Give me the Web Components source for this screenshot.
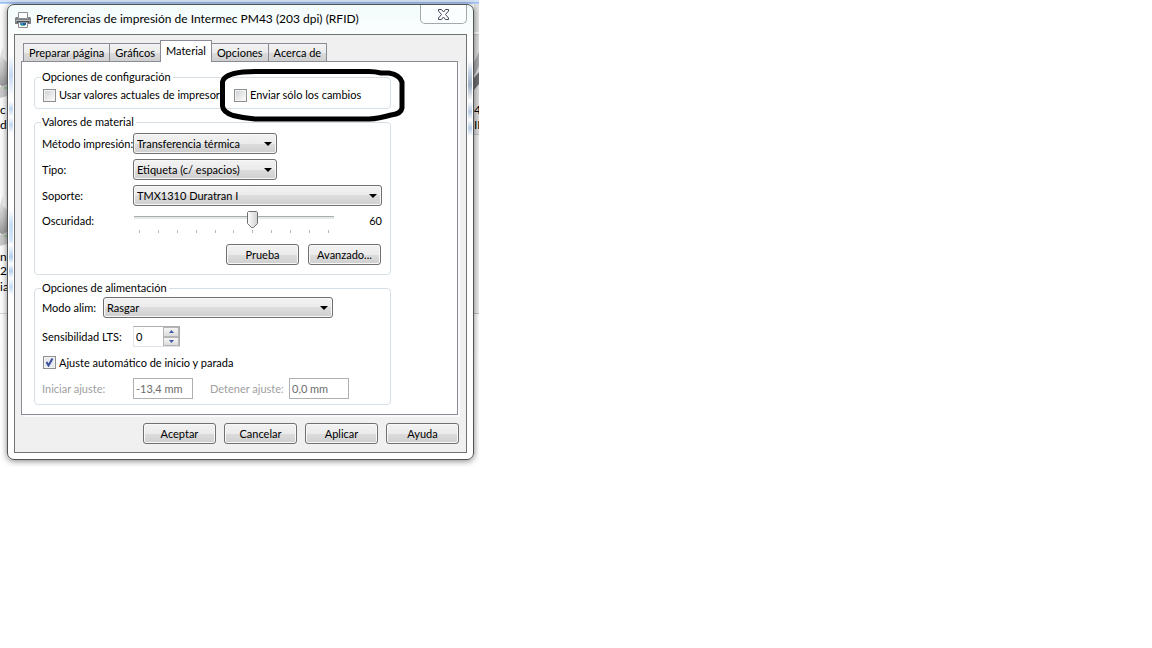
<!DOCTYPE html>
<html lang="es">
<head>
<meta charset="utf-8">
<title>Preferencias de impresión</title>
<style>
body {
  margin: 0;
  background: #ffffff;
  color: #000000;
  font-family: Lato, "Liberation Sans", sans-serif;
  font-size: 11px;
  line-height: 14px;
}
</style>
</head>
<body>

<desk-top>
  <pref-dialog heading="Preferencias de impresión de Intermec PM43 (203 dpi) (RFID)">
    <tab-panel tabs="Preparar página|Gráficos|Material|Opciones|Acerca de" active="2">
      <group-box legend="Opciones de configuración" class="config">
        <field-row class="checks">
          <check-box label="Usar valores actuales de impresora"></check-box>
          <check-box label="Enviar sólo los cambios"></check-box>
        </field-row>
        <pen-mark slot="over"></pen-mark>
      </group-box>

      <group-box legend="Valores de material" class="material">
        <combo-box label="Método impresión:" value="Transferencia térmica" class="short"></combo-box>
        <combo-box label="Tipo:" value="Etiqueta (c/ espacios)" class="short"></combo-box>
        <combo-box label="Soporte:" value="TMX1310 Duratran I"></combo-box>
        <track-bar label="Oscuridad:" value="60"></track-bar>
        <field-row class="end">
          <push-button>Prueba</push-button>
          <push-button>Avanzado...</push-button>
        </field-row>
      </group-box>

      <group-box legend="Opciones de alimentación" class="feed">
        <combo-box label="Modo alim:" value="Rasgar" class="mode"></combo-box>
        <spin-box label="Sensibilidad LTS:" value="0"></spin-box>
        <check-box label="Ajuste automático de inicio y parada" checked></check-box>
        <field-row class="adjust">
          <text-field label="Iniciar ajuste:" value="-13,4 mm" class="start"></text-field>
          <text-field label="Detener ajuste:" value="0,0 mm" class="stop"></text-field>
        </field-row>
      </group-box>
    </tab-panel>

    <push-button slot="actions">Aceptar</push-button>
    <push-button slot="actions">Cancelar</push-button>
    <push-button slot="actions">Aplicar</push-button>
    <push-button slot="actions">Ayuda</push-button>
  </pref-dialog>
</desk-top>

<script>
function template(html) {
  const t = document.createElement('template');
  t.innerHTML = '<style>:host, * { box-sizing: border-box; }</style>' + html;
  return t;
}

class BaseElement extends HTMLElement {
  constructor() {
    super();
    this.attachShadow({ mode: 'open' });
  }

  connectedCallback() {
    if (this.shadowRoot.childNodes.length) return;
    this.shadowRoot.appendChild(this.constructor.template.content.cloneNode(true));
    this.render();
  }

  $(selector) {
    return this.shadowRoot.querySelector(selector);
  }

  render() {}
}

/* Strip of the folder window that lies behind the dialog */
class DeskTop extends BaseElement {
  static template = template(`
<style>
:host {
  display: block;
  position: relative;
  width: fit-content;
  padding: 4px 5px 7px 7px;
  overflow: hidden;
  background: linear-gradient(#d6e3f6 0, #d6e3f6 2px, #8fb8f0 2px, #c3dafa 4px, #fbfbfb 4px, #ffffff 100%);
}
.behind {
  position: absolute;
  top: 0;
  bottom: 0;
  width: 7px;
}
.left { left: 0; }
.right { right: 0; width: 5px; }
.behind span {
  position: absolute;
  left: 0;
  font-size: 12px;
  line-height: 14px;
}
svg { position: absolute; top: 0; left: 0; }
</style>
<div class="behind left">
  <svg width="7" height="467" aria-hidden="true">
    <defs>
      <linearGradient id="g" x1="0" y1="0" x2="0" y2="1">
        <stop offset="0" stop-color="#f4f4f4"/>
        <stop offset=".6" stop-color="#bdbdbd"/>
        <stop offset="1" stop-color="#8f8f8f"/>
      </linearGradient>
    </defs>
    <path d="M0 57 L2 48 L4 49 L3 58 L7 62 V90 L0 85Z" fill="url(#g)"/>
    <path d="M0 87 L7 84 V96 L0 98Z" fill="#c9c9c9"/>
    <path d="M4 87h3v2h-3z" fill="#9bc598"/>
    <path d="M0 205 L2 196 L4 197 L3 206 L7 210 V238 L0 233Z" fill="url(#g)"/>
    <path d="M0 235 L7 232 V244 L0 246Z" fill="#c9c9c9"/>
    <path d="M4 235h3v2h-3z" fill="#9bc598"/>
    <path d="M0 313.500h7" stroke="#d8d8d8"/>
  </svg>
  <span style="top:103px">c</span>
  <span style="top:118px">d</span>
  <span style="top:250px">n</span>
  <span style="top:264px">22</span>
  <span style="top:280px">ia</span>
</div>
<div class="behind right">
  <svg width="5" height="467" aria-hidden="true">
    <path d="M0 4h5v28h-5z" fill="#e2e2e2"/>
    <path d="M0 34.500h5" stroke="#c4c4c4"/>
    <path d="M0 35h5v100h-5z" fill="#dcdcdc"/>
    <path d="M0 62 L5 52 V66 L0 76Z" fill="#a9a9ad"/>
    <path d="M0 78 L5 72 V84 L0 90Z" fill="#6f6f73"/>
    <path d="M0 135h5v178h-5z" fill="#ececec"/>
    <path d="M0 134.500h5M0 313.500h5" stroke="#c4c4c4"/>
  </svg>
  <span style="top:103px">4</span>
  <span style="top:118px">ID</span>
</div>
<slot></slot>
`);
}
customElements.define('desk-top', DeskTop);

/* Window frame with title bar, body and a row of actions */
class PrefDialog extends BaseElement {
  static template = template(`
<style>
:host {
  display: flex;
  flex-direction: column;
  position: relative;
  width: 467px;
  max-width: 100%;
  border: 1px solid #505457;
  border-radius: 7px;
  background: linear-gradient(#f3fbfb, #ffffff 40px);
  box-shadow: 0 1px 6px rgba(0, 0, 0, .5);
}
header {
  display: flex;
  align-items: center;
  height: 29px;
  padding-left: 7px;
  gap: 5px;
}
h1 {
  flex: 1;
  margin: 0 0 2px;
  font-size: 12px;
  line-height: 16px;
  font-weight: normal;
  white-space: nowrap;
}
.close {
  align-self: flex-start;
  display: flex;
  align-items: center;
  justify-content: center;
  width: 47px;
  height: 19px;
  margin-right: 6px;
  padding: 0;
  border: 1px solid #a2a8ab;
  border-top: 0;
  border-radius: 0 0 5px 5px;
  background: #fafefe;
}
main {
  margin: 0 6px 6px;
  padding: 5px 8px 8px 6px;
  border: 1px solid #6f7376;
  background: #f0f0f0;
}
/* blurred shapes seen through the glass border */
.glass {
  position: absolute;
  top: 50px;
  bottom: 20px;
  width: 4px;
}
.glass.l {
  left: 1px;
  background: linear-gradient(transparent, #c4d8f2 20px, transparent 42px, transparent 46px, #c4d8f2 54px, transparent 62px, #c4d8f2 70px, transparent 78px, transparent 155px, #c4dcf6 170px, #d4e6fa 185px, transparent 190px, #b4cdee 202px, transparent 209px, #b4cdee 216px, transparent 223px, #c4dcf6 232px, transparent 240px);
}
.glass.r {
  right: 1px;
  background: linear-gradient(transparent 6px, #c8d6e6 16px, #9eb0c4 30px, transparent 46px, #b6cce8 57px, transparent 65px, #b6cce8 73px, transparent 81px);
}
footer {
  display: flex;
  justify-content: flex-end;
  gap: 8px;
  margin-top: 8px;
  margin-right: -1px;
}
</style>
<div class="glass l"></div>
<div class="glass r"></div>
<header>
  <svg class="icon" width="16" height="16" viewBox="0 0 16 16" aria-hidden="true">
    <path d="M3.500 .5h9v6h-9z" fill="#fdfdfd" stroke="#8b8f93"/>
    <path d="M0 6.500Q0 5 1.500 5H3v2h10V5h1.500Q16 5 16 6.500V12H0z" fill="#7d8186"/>
    <path d="M1 8h14v1H1z" fill="#b9bdc1"/>
    <path d="M2 9h12v2H2z" fill="#494c50"/>
    <path d="M3.500 10.500h9v5h-9z" fill="#ffffff" stroke="#8b8f93"/>
    <path d="M5 11h3v2H5z" fill="#2f93c8"/>
    <path d="M8 11h3v2H8z" fill="#1e5f9b"/>
    <path d="M6 13h4v1H6z" fill="#63b98a"/>
  </svg>
  <h1></h1>
  <button class="close" aria-label="Cerrar">
    <svg width="13" height="11" viewBox="0 0 13 11" aria-hidden="true">
      <path d="M1.500 .5H4.500L6.500 3 8.500 .5H11.500V2L8.500 5.500 11.500 9V10.500H8.500L6.500 8 4.500 10.500H1.500V9L4.500 5.500 1.500 2z" fill="#ffffff" stroke="#43465b"/>
    </svg>
  </button>
</header>
<main>
  <slot></slot>
  <footer><slot name="actions"></slot></footer>
</main>
`);

  render() {
    this.$('h1').textContent = this.getAttribute('heading');
  }
}
customElements.define('pref-dialog', PrefDialog);

class TabPanel extends BaseElement {
  static template = template(`
<style>
:host { display: block; }
nav {
  display: flex;
  align-items: flex-end;
  height: 21px;
  padding-left: 2px;
}
button {
  height: 18px;
  margin: 0 0 0 -1px;
  padding: 0 5px;
  border: 1px solid #898c95;
  border-bottom: 0;
  background: linear-gradient(#f3f3f3, #ebebeb 50%, #dddddd 50%, #cfcfcf);
  font: inherit;
  color: inherit;
  white-space: nowrap;
}
button:first-child { margin-left: 0; }
button[aria-selected="true"] {
  position: relative;
  height: 22px;
  margin-bottom: -1px;
  padding-bottom: 2px;
  background: #ffffff;
}
.panel {
  display: flex;
  flex-direction: column;
  gap: 6px;
  padding: 8px 66px 9px 12px;
  border: 1px solid #898c95;
  background: #ffffff;
  box-shadow: 2px 2px 0 #fafafa;
}
</style>
<nav role="tablist"></nav>
<div class="panel" role="tabpanel"><slot></slot></div>
`);

  render() {
    const active = Number(this.getAttribute('active'));
    this.getAttribute('tabs').split('|').forEach((text, i) => {
      const button = document.createElement('button');
      button.setAttribute('role', 'tab');
      button.setAttribute('aria-selected', i === active);
      button.textContent = text;
      this.$('nav').appendChild(button);
    });
  }
}
customElements.define('tab-panel', TabPanel);

class GroupBox extends BaseElement {
  static template = template(`
<style>
:host {
  display: block;
  position: relative;
}
fieldset {
  display: flex;
  flex-direction: column;
  min-width: 0;
  margin: 0;
  padding: 0 8px 9px 7px;
  border: 1px solid #d5dfe5;
  border-radius: 4px;
}
legend {
  padding: 0 2px 0 1px;
  margin-left: -1px;
}
:host(.config) fieldset { padding-bottom: 2px; }
:host(.material) fieldset { gap: 5px; padding-top: 4px; }
:host(.feed) fieldset { gap: 8px; padding-top: 2px; padding-bottom: 5px; }
</style>
<fieldset><legend></legend><slot></slot></fieldset>
<slot name="over"></slot>
`);

  render() {
    this.$('legend').textContent = this.getAttribute('legend');
  }
}
customElements.define('group-box', GroupBox);

class FieldRow extends BaseElement {
  static template = template(`
<style>
:host {
  display: flex;
  align-items: center;
}
:host(.checks) { height: 22px; }
:host(.checks) ::slotted(:first-child) { width: 191px; }
:host(.end) { justify-content: flex-end; gap: 9px; padding-right: 1px; }
:host(.adjust) { gap: 17px; }
</style>
<slot></slot>
`);
}
customElements.define('field-row', FieldRow);

class CheckBox extends BaseElement {
  static template = template(`
<style>
:host { display: block; }
label {
  display: flex;
  align-items: center;
  gap: 3px;
  height: 15px;
  white-space: nowrap;
}
input {
  appearance: none;
  flex: none;
  width: 13px;
  height: 13px;
  margin: 0 0 0 1px;
  border: 1px solid #8e8f8f;
  background: linear-gradient(135deg, #c9cdd2, #f6f6f6 80%);
  box-shadow: inset 0 0 0 1px #f4f4f4;
}
input:checked {
  background: url('data:image/svg+xml,<svg xmlns="http://www.w3.org/2000/svg" width="11" height="11"><path d="M2.500 5L4.500 8.500L8.500 1.500" fill="none" stroke="%23394f9c" stroke-width="2"/></svg>') #e6e9ee;
}
</style>
<label><input type="checkbox"><span></span></label>
`);

  render() {
    this.$('span').textContent = this.getAttribute('label');
    this.$('input').checked = this.hasAttribute('checked');
  }
}
customElements.define('check-box', CheckBox);

class ComboBox extends BaseElement {
  static template = template(`
<style>
:host {
  display: flex;
  align-items: center;
}
label {
  flex: none;
  width: 91px;
  white-space: nowrap;
}
select {
  appearance: none;
  flex: 1;
  min-width: 0;
  height: 21px;
  margin: 0;
  padding: 0 20px 0 3px;
  border: 1px solid #707070;
  border-radius: 3px;
  background:
    url('data:image/svg+xml,<svg xmlns="http://www.w3.org/2000/svg" width="8" height="4"><path d="M0 0h8L4 4z"/></svg>') no-repeat right 4px center,
    linear-gradient(#f2f2f2, #ebebeb 50%, #dddddd 50%, #cfcfcf);
  box-shadow: inset 0 0 0 1px #f8f8f8;
  font: inherit;
  color: inherit;
}
:host(.short) select { flex: 0 0 144px; }
:host(.mode) label { width: 61px; }
:host(.mode) select { flex: 0 0 230px; }
</style>
<label for="c"></label>
<select id="c"><option></option></select>
`);

  render() {
    this.$('label').textContent = this.getAttribute('label');
    this.$('option').textContent = this.getAttribute('value');
  }
}
customElements.define('combo-box', ComboBox);

class TrackBar extends BaseElement {
  static template = template(`
<style>
:host {
  display: flex;
  align-items: flex-start;
  height: 28px;
}
label {
  flex: none;
  width: 92px;
  padding-top: 3px;
}
.track {
  flex: 0 0 200px;
  display: flex;
  flex-direction: column;
  gap: 2px;
}
input {
  appearance: none;
  width: 100%;
  height: 17px;
  margin: 0;
  background: linear-gradient(#a8acac 0, #a8acac 1px, #e4eaea 1px, #e4eaea 3px) no-repeat 0 5px / 100% 3px;
}
input::-webkit-slider-thumb {
  appearance: none;
  width: 11px;
  height: 18px;
  background: url('data:image/svg+xml,<svg xmlns="http://www.w3.org/2000/svg" width="11" height="18"><defs><linearGradient id="a" x2="1" y2="0"><stop offset="0" stop-color="%23ffffff"/><stop offset="1" stop-color="%23d0d0d0"/></linearGradient></defs><path d="M1.500 .5h8l1 1v11l-4 4h-2l-4-4v-11z" fill="url(%23a)" stroke="%23707070"/></svg>') no-repeat;
}
.ticks {
  display: flex;
  justify-content: space-between;
  padding: 0 5px;
}
.ticks i {
  width: 1px;
  height: 3px;
  background: #b8b8b8;
}
output {
  flex: 1;
  padding-top: 3px;
  text-align: right;
}
</style>
<label for="r"></label>
<div class="track">
  <input id="r" type="range" min="0" max="100">
  <div class="ticks"></div>
</div>
<output for="r"></output>
`);

  render() {
    const input = this.$('input');
    const output = this.$('output');
    this.$('label').textContent = this.getAttribute('label');
    this.$('.ticks').innerHTML = '<i></i>'.repeat(11);
    input.value = this.getAttribute('value');
    output.textContent = input.value;
    input.addEventListener('input', () => {
      output.textContent = input.value;
    });
  }
}
customElements.define('track-bar', TrackBar);

class SpinBox extends BaseElement {
  static template = template(`
<style>
:host {
  display: flex;
  align-items: center;
}
label {
  width: 91px;
  white-space: nowrap;
}
.box {
  display: flex;
  width: 47px;
  height: 21px;
  border: 1px solid #abadb3;
  border-left-color: #e2e3ea;
  border-bottom-color: #e2e3ea;
}
input {
  appearance: textfield;
  flex: 1;
  min-width: 0;
  margin: 0;
  padding: 0 2px;
  border: 0;
  font: inherit;
  background: #ffffff;
}
input::-webkit-inner-spin-button { appearance: none; }
.arrows {
  display: flex;
  flex-direction: column;
  width: 16px;
}
button {
  flex: 1;
  display: flex;
  align-items: center;
  justify-content: center;
  padding: 0;
  border: 1px solid #b5b5b5;
  background: linear-gradient(#f6f6f6, #dcdcdc);
}
</style>
<label for="n"></label>
<div class="box">
  <input id="n" type="number">
  <div class="arrows">
    <button class="up" aria-label="Aumentar"><svg width="5" height="3"><path d="M0 3h5L2.500 0z" fill="#3f5aa5"/></svg></button>
    <button class="down" aria-label="Disminuir"><svg width="5" height="3"><path d="M0 0h5L2.500 3z" fill="#3f5aa5"/></svg></button>
  </div>
</div>
`);

  render() {
    const input = this.$('input');
    this.$('label').textContent = this.getAttribute('label');
    input.value = this.getAttribute('value');
    this.$('.up').addEventListener('click', () => input.stepUp());
    this.$('.down').addEventListener('click', () => input.stepDown());
  }
}
customElements.define('spin-box', SpinBox);

class TextField extends BaseElement {
  static template = template(`
<style>
:host {
  display: flex;
  align-items: center;
}
label {
  color: #a0a0a0;
  white-space: nowrap;
}
:host(.start) label { width: 91px; }
:host(.stop) label { width: 79px; }
input {
  width: 60px;
  height: 21px;
  margin: 0;
  padding: 0 2px;
  border: 1px solid #afafaf;
  background: #ffffff;
  font: inherit;
  color: #6d6d6d;
}
</style>
<label for="t"></label>
<input id="t" type="text" disabled>
`);

  render() {
    this.$('label').textContent = this.getAttribute('label');
    this.$('input').value = this.getAttribute('value');
  }
}
customElements.define('text-field', TextField);

class PushButton extends BaseElement {
  static template = template(`
<style>
:host { display: block; }
button {
  display: block;
  width: 73px;
  height: 21px;
  margin: 0;
  padding: 0;
  border: 1px solid #707070;
  border-radius: 3px;
  background: linear-gradient(#f2f2f2, #ebebeb 50%, #dddddd 50%, #cfcfcf);
  box-shadow: inset 0 0 0 1px #f8f8f8;
  font: inherit;
  color: inherit;
}
</style>
<button><slot></slot></button>
`);
}
customElements.define('push-button', PushButton);

/* Thick pen outline drawn over a group */
class PenMark extends BaseElement {
  static template = template(`
<style>
:host {
  position: absolute;
  top: -2px;
  right: -14px;
  pointer-events: none;
}
svg { display: block; }
</style>
<svg width="186" height="54" viewBox="0 0 186 54" aria-hidden="true">
  <path d="M24 4Q30 3.500 38 3.500H150Q156 3.500 162 5H170Q181 7 183 14V40Q182 46 172 47Q160 50.500 150 51H36Q24 50 14 47.500Q4 44 3.500 38V14Q5 6 24 4z" fill="none" stroke="#000000" stroke-width="5" stroke-linejoin="round"/>
</svg>
`);
}
customElements.define('pen-mark', PenMark);
</script>
</body>
</html>
